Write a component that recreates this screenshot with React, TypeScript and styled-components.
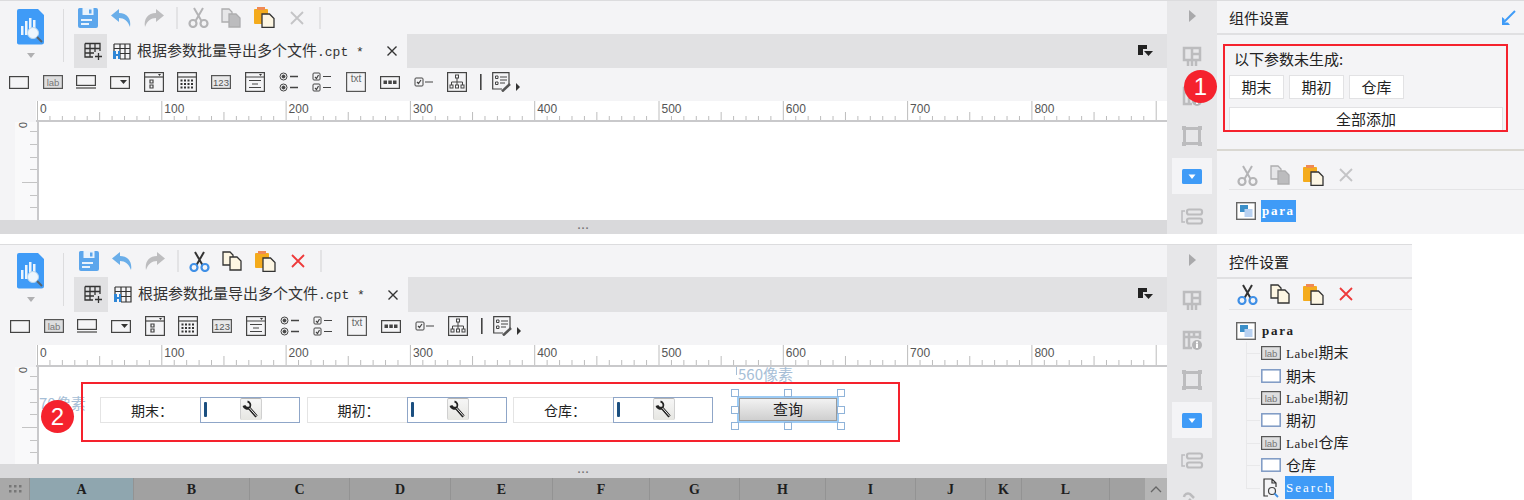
import React from "react";
import styled, { createGlobalStyle } from "styled-components";

const CJK = `"Noto Sans CJK SC", "Liberation Sans", sans-serif`;
const MONO = `"Liberation Mono", "Noto Sans CJK SC", monospace`;
const SERIF = `"Liberation Serif", "Noto Sans CJK SC", serif`;
const RED = "#f5222d";

const Global = createGlobalStyle`
  html, body { margin: 0; padding: 0; background: #fff; }
  * { box-sizing: border-box; }
`;

const Page = styled.div`
  width: 1524px; height: 500px; overflow: hidden; background: #fff;
  display: flex; flex-direction: column; gap: 10px;
  font-family: ${CJK}; color: #222;
`;
const Win = styled.section<{ $w: number; $h: number }>`
  position: relative; width: ${p => p.$w}px; height: ${p => p.$h}px; flex: none;
  display: flex; overflow: hidden; background: #f4f4f6; border-top: 1px solid #dcdcde;
`;
const Main = styled.div`
  width: 1167px; flex: none; display: flex; flex-direction: column; min-height: 0;
`;
const Head = styled.div` display: flex; flex: none; `;
const Brand = styled.div`
  width: 74px; flex: none; position: relative; display: flex; flex-direction: column;
  align-items: flex-start; padding: 8px 0 0 17px; gap: 8px;
  & > :last-child { margin-left: 10px; }
  &::after { content: ""; position: absolute; left: 63px; top: 8px; bottom: 6px; width: 1px; background: #dcdcde; }
`;
const HeadRight = styled.div` flex: 1; min-width: 0; display: flex; flex-direction: column; `;
const Toolbar = styled.div<{ $h: number; $pad?: number }>`
  height: ${p => p.$h}px; display: flex; align-items: center; gap: 7px; padding-left: ${p => p.$pad ?? 0}px;
`;
const ToolBtn = styled.span`
  width: 26px; height: 24px; display: flex; align-items: center; justify-content: center; flex: none;
`;
const ToolSep = styled.span` width: 2px; height: 22px; background: #e3e3e5; flex: none; margin-left: 2px; `;
const TabBar = styled.div<{ $h: number; $add: number }>`
  height: ${p => p.$h}px; background: #e1e1e3; display: flex; align-items: center;
  & > :first-child { width: ${p => p.$add}px; }
`;
const AddTab = styled.span` display: flex; align-items: center; justify-content: center; flex: none; padding-left: 5px; `;
const ActiveTab = styled.div`
  width: 300px; height: 100%; background: #f4f4f6; display: flex; align-items: center; padding: 0 10px 0 6px; gap: 6px;
`;
const TabName = styled.span` font-size: 15px; color: #333; white-space: nowrap; line-height: 20px; `;
const TabExt = styled.span` font-family: ${MONO}; font-size: 13px; `;
const TabClose = styled.span` margin-left: auto; display: flex; `;
const TabEnd = styled.span` margin-left: auto; margin-right: 14px; display: flex; `;

const WidgetBar = styled.div<{ $pad: number }>`
  height: 33px; flex: none; display: flex; align-items: center; gap: 9.7px; padding: 0 0 5px ${p => p.$pad}px;
`;
const WidgetBtn = styled.span<{ $w: number }>`
  width: ${p => p.$w}px; height: 22px; display: flex; align-items: center; justify-content: center; flex: none;
`;
const RulerRow = styled.div<{ $h: number }>`
  height: ${p => p.$h}px; flex: none; display: flex; padding-left: 36px;
`;
const RulerTop = styled.div`
  flex: 1; background: #fff; border-bottom: 2px solid #c9c9cb; overflow: hidden; display: flex;
`;
const CanvasRow = styled.div` flex: 1; min-height: 0; display: flex; padding-left: 15px; `;
const RulerLeft = styled.div`
  width: 22px; flex: none; background: #f9f9fa; overflow: hidden; display: flex;
`;
const Canvas = styled.div`
  flex: 1; background: #fff; border-left: 2px solid #c9c9cb; position: relative;
`;
const Grip = styled.div`
  height: 14px; flex: none; background: #d9d9db; color: #777; font-size: 11px; line-height: 10px;
  text-align: center; letter-spacing: 1px; font-weight: 700; font-family: "Liberation Sans", sans-serif;
`;
const GridHead = styled.div`
  height: 22px; flex: none; display: flex; background: #a1a1a1;
`;
const Corner = styled.span`
  width: 30px; flex: none; background: #a8a8a8; display: flex; align-items: center; justify-content: center;
  border-right: 1px solid #929292;
`;
const ColCell = styled.span<{ $w: number; $sel?: boolean }>`
  width: ${p => p.$w}px; flex: none; text-align: center; font: 700 14px/24px ${SERIF}; color: #1e1e1e;
  background: ${p => (p.$sel ? "#8fa6af" : "transparent")}; border-right: 1px solid #939393;
`;
const ScrollUp = styled.span`
  width: 22px; margin-left: auto; background: #b5b5b5; display: flex; align-items: center; justify-content: center;
`;

const Params = styled.div`
  position: absolute; left: 61px; top: 30px; display: flex; gap: 6.500px; height: 26px;
`;
const Param = styled.div` display: flex; `;
const ParamLabel = styled.span`
  width: 100px; height: 26px; border: 1px solid #e4e4e4; border-right: 0; background: #fff;
  font-size: 14px; line-height: 24px; padding-left: 30px; color: #222; white-space: nowrap;
`;
const ParamInput = styled.span`
  width: 100px; height: 26px; border: 1px solid #8fa6c8; background: #fff; position: relative;
  display: flex; align-items: center; padding-left: 3px; gap: 33px;
`;
const Caret = styled.span` width: 3px; height: 15px; background: #1b4f80; border-radius: 1px; margin-top: -2px; flex: none; `;
const Wrench = styled.span`
  width: 22px; height: 22px; background: linear-gradient(#f6f6f6, #e6e6e2); border-top: 1px solid #b5b5b5;
  border-left: 1px solid #d0d0d0; border-right: 1px solid #d0d0d0; border-radius: 2px; display: flex; flex: none; margin-top: -3px;
`;
const SizeTag = styled.span`
  position: absolute; left: 697px; top: -1px; font-size: 15px; line-height: 16px; color: #a6bed6; white-space: nowrap;
  padding-left: 2px;
  &::before { content: ""; position: absolute; left: 0; top: 1px; height: 8px; width: 1px; background: #a6bed6; }
`;
const SizeSide = styled.span`
  position: absolute; left: 0; top: 26px; font-size: 15px; line-height: 20px; color: #a6bed6; white-space: nowrap;
`;
const Selection = styled.div`
  position: absolute; left: 698px; top: 29px; width: 102px; height: 27px; border: 2px solid #9ccbf5;
`;
const QueryBtn = styled.span`
  display: block; height: 100%; background: linear-gradient(#f2f2f2, #cfcfcf); border: 1px solid #9a9a9a;
  text-align: center; font-size: 15px; line-height: 20px; color: #222;
`;
const Handles = styled.div` position: absolute; inset: -5px -4px; `;
const Handle = styled.i<{ $x: number; $y: number }>`
  position: absolute; width: 8px; height: 8px; background: #fff; border: 1px solid #8fb3d9;
  left: calc(${p => p.$x}% - 4px); top: calc(${p => p.$y}% - 4px);
`;

const Rail = styled.div`
  width: 50px; flex: none; background: #e7e7e9; display: flex; flex-direction: column; align-items: center; overflow: hidden;
`;
const RailArrow = styled.span` height: 30px; margin-bottom: 5px; display: flex; align-items: center; flex: none; `;
const RailItem = styled.span<{ $on?: boolean }>`
  height: 40px; width: 40px; flex: none; display: flex; align-items: center; justify-content: center; position: relative;
  ${p => p.$on ? `&::before { content: ""; position: absolute; inset: 2px 0; background: #f4f4f6; }` : ""}
  & > svg { position: relative; }
`;

const Side = styled.aside`
  flex: 1; min-width: 0; display: flex; flex-direction: column; position: relative;
  &::before { content: ""; position: absolute; top: -1px; left: 177px; right: 0; height: 1px; background: #b4dcf6; }
`;
const SideHead = styled.header<{ $h: number }>`
  height: ${p => p.$h}px; flex: none; border-bottom: 2px solid #e0e0e2; display: flex; align-items: center;
  justify-content: space-between; padding: 0 8px 0 12px;
`;
const SideTitle = styled.h2` margin: 0; font-size: 15px; font-weight: 400; color: #222; `;
const Missing = styled.div`
  flex: none; padding: 15px 0 18px 12px; border-bottom: 2px solid #dad8d2; display: flex; flex-direction: column; height: 116px;
`;
const MissingText = styled.div` height: 18px; font-size: 15px; line-height: 18px; margin-left: 5px; color: #222; `;
const ChipRow = styled.div` display: flex; gap: 5px; margin-top: 7px; `;
const Chip = styled.span`
  width: 55px; height: 24px; border: 1px solid #e2e2e4; background: #fff; text-align: center;
  font-size: 15px; line-height: 22px; color: #222;
`;
const AddAll = styled.span`
  display: block; width: 274px; height: 24px; margin-top: 8px; border: 1px solid #e2e2e4; background: #fff;
  text-align: center; font-size: 15px; line-height: 22px; color: #222;
`;
const SideTools = styled.div<{ $h: number; $top: number }>`
  height: ${p => p.$h}px; padding: ${p => p.$top}px 0 0 5px; margin-left: 12px; flex: none; border-bottom: 1px solid #e4e4e6;
  display: flex; align-items: center; gap: 7px;
`;
const Tree = styled.div` flex: none; display: flex; flex-direction: column; padding-top: 10px; position: relative; `;
const Root = styled.div`
  height: 22px; display: flex; align-items: center; padding-left: 19px; gap: 5px;
`;
const RootName = styled.span<{ $sel?: boolean }>`
  font: 700 13px/22px ${SERIF}; letter-spacing: 1.700px; padding: 0 1px; color: ${p => (p.$sel ? "#fff" : "#222")};
  background: ${p => (p.$sel ? "#3f9bf7" : "transparent")};
`;
const Node = styled.div`
  height: 22.4px; display: flex; align-items: center; padding-left: 44px; gap: 5px; position: relative; flex: none;
  &::before { content: ""; position: absolute; left: 29px; width: 14px; top: 50%; height: 1px; background: #e8e8ea; }
`;
const TreeLine = styled.i`
  position: absolute; left: 29px; top: 32px; bottom: 11px; width: 1px; background: #e8e8ea;
`;
const NodeName = styled.span` font-size: 15px; line-height: 22px; color: #222; white-space: nowrap; `;
const NodeMono = styled.span` font: 400 13px/22px ${SERIF}; letter-spacing: .6px; `;
const SearchName = styled.span`
  font: 400 13px/23px ${SERIF}; letter-spacing: 2px; background: #3f9bf7; color: #fff; padding: 0 1px; height: 23px; margin-left: -1px;
`;

const RedBox = styled.div<{ $l: number; $t: number; $w: number; $h: number }>`
  position: absolute; left: ${p => p.$l}px; top: ${p => p.$t}px; width: ${p => p.$w}px; height: ${p => p.$h}px;
  border: 2px solid ${RED}; pointer-events: none;
`;
const Badge = styled.span<{ $l: number; $t: number }>`
  position: absolute; left: ${p => p.$l}px; top: ${p => p.$t}px; width: 33px; height: 33px; border-radius: 50%;
  background: ${RED}; color: #fff; font: 400 24px/33px "Liberation Sans", sans-serif; text-align: center;
`;

/* ---------- icons ---------- */
const Logo = () => (
  <svg width="28" height="36" viewBox="0 0 28 36">
    <path d="M2 0H21L27 6V33a2.500 2.500 0 0 1-2.500 2.500H2A2 2 0 0 1 0 33V2A2 2 0 0 1 2 0Z" fill="#3f9bf7" />
    <g fill="#fff" opacity=".9">
      <rect x="4" y="17" width="2.500" height="9" /><rect x="8" y="12" width="2.500" height="14" />
      <rect x="12" y="9" width="2.500" height="14" /><rect x="16" y="11" width="2.500" height="10" />
    </g>
    <circle cx="16" cy="24" r="5.500" fill="#eef6fd" stroke="#b9d6ee" />
    <path d="M20 28l5 5" stroke="#55636e" strokeWidth="2" />
  </svg>
);
const Caret6 = () => (<svg width="8" height="5" viewBox="0 0 8 5"><path d="M0 0h8L4 5z" fill="#b0b0b2" /></svg>);
const Save = () => (
  <svg width="20" height="20" viewBox="0 0 20 20">
    <path d="M1.500 0H18a2 2 0 0 1 2 2V18a2 2 0 0 1-2 2H2a2 2 0 0 1-2-2V1.500A1.500 1.500 0 0 1 1.500 0Z" fill="#5ca6ec" />
    <rect x="4.500" y="0" width="11" height="7" fill="#eaf3fc" /><rect x="11" y="1.500" width="2.500" height="4" fill="#5ca6ec" />
    <rect x="3" y="11" width="11" height="2" fill="#eaf3fc" /><rect x="3" y="15" width="8" height="2" fill="#eaf3fc" />
  </svg>
);
const Undo = ({ c, flip }: { c: string; flip?: boolean }) => (
  <svg width="22" height="18" viewBox="0 0 22 18">
    <path transform={flip ? "matrix(-1 0 0 1 22 0)" : undefined} d="M9 0L1 6.500 9 13V9C14 9 18 12 20 18 21.500 10 17 4 9 4Z" fill={c} />
  </svg>
);
const Cut = ({ a, b }: { a: string; b: string }) => (
  <svg width="21" height="21" viewBox="0 0 21 21" fill="none">
    <path d="M6 1L13.500 14M15 1L7.500 14" stroke={a} strokeWidth="2" />
    <circle cx="5" cy="16.500" r="3.500" stroke={b} strokeWidth="2.200" /><circle cx="16" cy="16.500" r="3.500" stroke={b} strokeWidth="2.200" />
  </svg>
);
const Copy = ({ on }: { on?: boolean }) => {
  const s = on ? "#333" : "#adadaf"; const f = on ? "#fdf6e3" : "#e6e6e8"; const g = on ? "#fdf6e3" : "#bcbcbe";
  return (
    <svg width="20" height="20" viewBox="0 0 20 20">
      <path d="M1 1H8L11 4V14H1Z" fill={f} stroke={s} strokeWidth="1.300" />
      <path d="M8 6H15L19 10V19H8Z" fill={g} stroke={s} strokeWidth="1.300" />
    </svg>
  );
};
const Paste = () => (
  <svg width="21" height="21" viewBox="0 0 21 21">
    <rect x="0" y="2" width="14" height="15" rx="1" fill="#f4ab1c" /><rect x="3" y="0" width="8" height="3" fill="#f08a54" />
    <path d="M8 7H15.500L20 11.500V20.500H8Z" fill="#fdf6e3" stroke="#333" strokeWidth="1.300" />
  </svg>
);
const Del = ({ c }: { c: string }) => (
  <svg width="14" height="14" viewBox="0 0 14 14"><path d="M1 1L13 13M13 1L1 13" stroke={c} strokeWidth="1.800" /></svg>
);
const Tools = ({ on }: { on?: boolean }) => (
  <>
    <ToolBtn>{on ? <Cut a="#333" b="#3f8fe6" /> : <Cut a="#b4b4b6" b="#b4b4b6" />}</ToolBtn>
    <ToolBtn><Copy on={on} /></ToolBtn>
    <ToolBtn><Paste /></ToolBtn>
    <ToolBtn><Del c={on ? "#ee3a3a" : "#c4c4c6"} /></ToolBtn>
  </>
);
const GridPlus = () => (
  <svg width="19" height="19" viewBox="0 0 19 19" fill="none" stroke="#333" strokeWidth="1.300">
    <path d="M1 1.500H16V9M1 1.500V15H9M1 6.500H16M1 11H10M6 1.500V15M11 1.500V10M14.500 11V18M11 14.500H18" />
  </svg>
);
const FileGrid = () => (
  <svg width="18" height="17" viewBox="0 0 18 17">
    <path d="M1 1H17V16H7M1 1V9M1 5.500H17M1 1M7 1V16M12 1V16M7 10.500H17" fill="none" stroke="#333" strokeWidth="1.200" />
    <path d="M0 8h3v3h2V8h2v8H5v-3H3v3H0z" fill="#2f86d6" />
  </svg>
);
const SmallX = () => (<svg width="10" height="10" viewBox="0 0 10 10"><path d="M.5.500l9 9M9.500.500l-9 9" stroke="#333" strokeWidth="1.400" /></svg>);
const TabMenu = () => (
  <svg width="15" height="13" viewBox="0 0 15 13"><path d="M0 0H9V4H5V10H0Z" fill="#222" /><path d="M6 6H15L10.500 11Z" fill="#222" /></svg>
);

const B = { fill: "none", stroke: "#444", strokeWidth: 1.200 } as const;
const Lab = ({ w = 20, h = 14 }: { w?: number; h?: number }) => (
  <svg width={w} height={h} viewBox="0 0 20 14">
    <rect x=".6" y=".6" width="18.800" height="12.800" fill="#dededf" stroke="#555" strokeWidth="1.200" />
    <text x="10" y="10.500" textAnchor="middle" fontFamily="Liberation Sans" fontSize="9.500" fill="#777">lab</text>
  </svg>
);
const widgets: [number, React.ReactNode][] = [
  [24, <svg key="a" width="20" height="13" viewBox="0 0 20 13"><rect x=".6" y=".6" width="18.800" height="11.800" {...B} /></svg>],
  [24, <Lab key="b" />],
  [24, <svg key="c" width="20" height="14" viewBox="0 0 20 14"><rect x=".6" y=".6" width="18.800" height="9.800" {...B} /><path d="M0 13H20" {...B} /></svg>],
  [24, <svg key="d" width="20" height="13" viewBox="0 0 20 13"><rect x=".6" y=".6" width="18.800" height="11.800" {...B} /><path d="M10 4h7l-3.500 4z" fill="#333" /></svg>],
  [24, <svg key="e" width="20" height="20" viewBox="0 0 20 20"><rect x=".6" y=".6" width="18.800" height="18.800" {...B} /><path d="M1 5H19" {...B} /><path d="M14 2h3l-1.500 2z" fill="#333" /><path d="M6 8h3v3H6zM6 13h3v3H6z" {...B} /></svg>],
  [24, <svg key="f" width="20" height="20" viewBox="0 0 20 20"><rect x=".6" y=".6" width="18.800" height="18.800" {...B} /><path d="M1 5H19" {...B} /><g fill="#333">{[0,1,2,3].flatMap(c => [0,1,2].map(r => <rect key={`${c}${r}`} x={3.500 + c * 3.500} y={7.500 + r * 3.500} width="2" height="2" />))}</g></svg>],
  [24, <svg key="g" width="20" height="14" viewBox="0 0 20 14"><rect x=".6" y=".6" width="18.800" height="12.800" fill="#e8e8e9" stroke="#555" strokeWidth="1.200" /><text x="10" y="10.500" textAnchor="middle" fontFamily="Liberation Sans" fontSize="9.500" fill="#555">123</text></svg>],
  [24, <svg key="h" width="20" height="20" viewBox="0 0 20 20"><rect x=".6" y=".6" width="18.800" height="18.800" {...B} /><path d="M1 5H19M4 8.500H16M7 12H13M4 15.500H16" {...B} /><path d="M14 2h3l-1.500 2z" fill="#333" /></svg>],
  [24, <svg key="i" width="20" height="20" viewBox="0 0 20 20" fill="none" stroke="#444"><circle cx="4.500" cy="4.500" r="3.500" /><circle cx="4.500" cy="15.500" r="3.500" /><circle cx="4.500" cy="4.500" r="1.500" fill="#444" /><circle cx="4.500" cy="15.500" r="1.500" fill="#444" /><path d="M11 4.500H19M11 15.500H19" strokeWidth="1.300" /></svg>],
  [24, <svg key="j" width="20" height="20" viewBox="0 0 20 20" fill="none" stroke="#444"><rect x="1" y="1" width="7" height="7" rx="1" /><rect x="1" y="12" width="7" height="7" rx="1" /><path d="M3 5l1.500 1.500L6.500 3M3 16l1.500 1.500L6.500 14M11 4.500H19M11 15.500H19" strokeWidth="1.200" /></svg>],
  [24, <svg key="k" width="20" height="20" viewBox="0 0 20 20"><rect x=".6" y=".6" width="18.800" height="18.800" fill="none" stroke="#555" strokeWidth="1.200" /><text x="10" y="10" textAnchor="middle" fontFamily="Liberation Sans" fontSize="10" fill="#666">txt</text></svg>],
  [24, <svg key="l" width="20" height="13" viewBox="0 0 20 13"><rect x=".6" y=".6" width="18.800" height="11.800" {...B} /><g fill="#444"><rect x="3.500" y="4.500" width="3.500" height="3.500" /><rect x="8.300" y="4.500" width="3.500" height="3.500" /><rect x="13" y="4.500" width="3.500" height="3.500" /></g></svg>],
  [24, <svg key="m" width="19" height="10" viewBox="0 0 19 10" fill="none" stroke="#444"><rect x="1" y="1" width="8" height="8" rx="1" /><path d="M3 5l1.500 1.500L7 3M11 5H19" strokeWidth="1.200" /></svg>],
  [24, <svg key="n" width="20" height="20" viewBox="0 0 20 20" fill="none" stroke="#444"><rect x=".6" y=".6" width="18.800" height="18.800" strokeWidth="1.200" /><path d="M10 6V10M4.500 13V10H15.500V13M10 10V13" /><rect x="8.500" y="3" width="3" height="3" /><rect x="3" y="13" width="3" height="3" /><rect x="8.500" y="13" width="3" height="3" /><rect x="14" y="13" width="3" height="3" /></svg>],
  [4, <svg key="o" width="2" height="16" viewBox="0 0 2 16"><rect width="1.600" height="16" fill="#444" /></svg>],
  [30, <svg key="p" width="30" height="20" viewBox="0 0 30 20" fill="none" stroke="#444"><path d="M17 12V.7H.7V17H10" strokeWidth="1.200" /><path d="M3.500 4h2.500v2.500H3.500zM3.500 10h2.500v2.500H3.500zM8 5H15M8 8H15M8 11H13" /><path d="M10 19.500L18 12" strokeWidth="2.500" stroke="#555" /><path d="M24 11l4 4-4 4z" fill="#333" stroke="none" /></svg>],
];
const WidgetRow = ({ pad }: { pad: number }) => (
  <WidgetBar $pad={pad}>{widgets.map(([w, ic], i) => <WidgetBtn key={i} $w={w}>{ic}</WidgetBtn>)}</WidgetBar>
);

const Ruler = () => {
  const step = 12.43; const ticks = Array.from({ length: 91 }, (_, i) => i);
  return (
    <svg width="1131" height="24" viewBox="0 0 1131 24">
      {ticks.map(i => {
        const x = 1 + i * step; const major = i % 10 === 0; const mid = i % 5 === 0;
        return <rect key={i} x={x} y={major ? 0 : mid ? 11 : 15} width="1" height={major ? 20 : mid ? 9 : 5} fill="#bdbdbd" />;
      })}
      {[0,1,2,3,4,5,6,7,8].map(i => (
        <text key={i} x={4 + i * 124.3} y="12" fontFamily="Liberation Sans" fontSize="12" fill="#555">{i * 100}</text>
      ))}
    </svg>
  );
};
const VRuler = ({ h }: { h: number }) => (
  <svg width="22" height={h} viewBox={`0 0 22 ${h}`}>
    {[9, 22, 35, 47, 60, 73, 85].map((y, i) => (
      <rect key={y} x={i === 4 ? 7 : 15} y={y} width={i === 4 ? 15 : 7} height="1" fill="#c4c4c4" />
    ))}
    <text transform="translate(7 0) rotate(90)" x="0" y="0" fontFamily="Liberation Sans" fontSize="11" fill="#555" textAnchor="start" dominantBaseline="middle">0</text>
  </svg>
);

const G = { fill: "none", stroke: "#bcbcbe", strokeWidth: 3 } as const;
const railIcons: React.ReactNode[] = [
  <svg key="a" width="20" height="21" viewBox="0 0 20 21"><path d="M2 2H18V14H2ZM2 2V8M6 14V20M10 2V20M14 14V20M18 8H10M2 8" {...G} strokeWidth={2.500} /></svg>,
  <svg key="b" width="20" height="20" viewBox="0 0 20 20"><path d="M10 18H2V2H18V9M2 7H18M7 2V18M12 2V7" {...G} strokeWidth={2.500} /><circle cx="15" cy="15" r="5" fill="#b4b4b6" /><rect x="14" y="14" width="2" height="4" fill="#fff" /><rect x="14" y="11.500" width="2" height="2" fill="#fff" /></svg>,
  <svg key="c" width="20" height="20" viewBox="0 0 20 20"><rect x="2.500" y="2.500" width="15" height="15" {...G} /><g fill="#bcbcbe"><rect width="4" height="4" /><rect x="16" width="4" height="4" /><rect y="16" width="4" height="4" /><rect x="16" y="16" width="4" height="4" /></g></svg>,
  <svg key="d" width="20" height="15" viewBox="0 0 20 15"><rect width="20" height="15" rx="1.500" fill="#3f9bf7" /><path d="M6.500 5.500h7L10 10z" fill="#fff" /></svg>,
  <svg key="e" width="23" height="17" viewBox="0 0 23 17" fill="none" stroke="#bcbcbe" strokeWidth="2.200"><rect x="6" y="1.500" width="15" height="5" rx="2" /><rect x="6" y="10.500" width="15" height="5" rx="2" /><path d="M4 3H1V14H4" strokeWidth="1.500" /></svg>,
  <svg key="f" width="22" height="22" viewBox="0 0 22 22" fill="none" stroke="#bcbcbe" strokeWidth="2.500"><path d="M3 8a4 4 0 0 1 6-3l4 4M8 10l5 5a4 4 0 0 0 6-1" /></svg>,
];
const RailBar = () => (
  <Rail>
    <RailArrow><svg width="7" height="12" viewBox="0 0 7 12"><path d="M0 0L7 6 0 12z" fill="#a9a9ab" /></svg></RailArrow>
    {railIcons.map((ic, i) => <RailItem key={i} $on={i === 3}>{ic}</RailItem>)}
  </Rail>
);

const Stack = () => (
  <svg width="20" height="18" viewBox="0 0 20 18">
    <rect x=".7" y=".7" width="18.600" height="16.600" fill="#fff" stroke="#666" strokeWidth="1.400" />
    <rect x="4" y="3" width="8" height="7" fill="#3b8fc9" /><rect x="8.500" y="7" width="8" height="8" fill="#b9d2f2" />
  </svg>
);
const InputIcon = () => (
  <svg width="20" height="14" viewBox="0 0 20 14"><rect x=".8" y=".8" width="18.400" height="12.400" fill="#fff" stroke="#7d99c4" strokeWidth="1.500" /></svg>
);
const SearchDoc = () => (
  <svg width="20" height="20" viewBox="0 0 20 20" fill="none" stroke="#333" strokeWidth="1.200">
    <path d="M7 18H3V1H11L15 5V9M11 1V5H15" /><circle cx="11" cy="13" r="3.500" stroke="#444" /><path d="M13.500 15.500L17 19" strokeWidth="1.800" stroke="#3f8fe6" />
  </svg>
);
const WrenchIcon = () => (
  <svg width="20" height="21" viewBox="0 0 20 21">
    <path d="M3 6.500a3.800 3.800 0 0 0 5.200 2.500l7.300 8.500" fill="none" stroke="#222" strokeWidth="3" />
    <path d="M8.500 9l7 8" stroke="#f2f2f2" strokeWidth="1" />
    <path d="M6.500 2.500a3.800 3.800 0 0 1 2.500 5.500" fill="none" stroke="#222" strokeWidth="1.800" />
  </svg>
);

const cols: [string, number][] = [["A",104],["B",116],["C",100],["D",101],["E",102],["F",97],["G",90],["H",86],["I",90],["J",70],["K",36],["L",88]];
const fields = ["期末", "期初", "仓库"];
const nodes: [string, boolean][] = [["期末", true], ["期末", false], ["期初", true], ["期初", false], ["仓库", true], ["仓库", false]];
const handles: [number, number][] = [[0,0],[50,0],[100,0],[0,50],[100,50],[0,100],[50,100],[100,100]];

const Tab = () => (
  <ActiveTab>
    <FileGrid />
    <TabName>根据参数批量导出多个文件<TabExt>.cpt *</TabExt></TabName>
    <TabClose><SmallX /></TabClose>
  </ActiveTab>
);
const Upper = ({ on, tool, tab, add, pad }: { on: boolean; tool: number; tab: number; add: number; pad: number }) => (
  <Head>
    <Brand><Logo /><Caret6 /></Brand>
    <HeadRight>
      <Toolbar $h={tool} $pad={pad}>
        <ToolBtn><Save /></ToolBtn>
        <ToolBtn><Undo c="#6aaee9" /></ToolBtn>
        <ToolBtn><Undo c="#bdbdbf" flip /></ToolBtn>
        <ToolSep />
        <Tools on={on} />
        <ToolSep />
      </Toolbar>
      <TabBar $h={tab} $add={add}>
        <AddTab><GridPlus /></AddTab>
        <Tab />
        <TabEnd><TabMenu /></TabEnd>
      </TabBar>
    </HeadRight>
  </Head>
);

export default function App() {
  return (
    <>
      <Global />
      <Page>
        <Win $w={1524} $h={234}>
          <Main>
            <Upper on={false} tool={33} tab={34} add={33} pad={1} />
            <WidgetRow pad={7} />
            <RulerRow $h={21}><RulerTop><Ruler /></RulerTop></RulerRow>
            <CanvasRow><RulerLeft><VRuler h={98} /></RulerLeft><Canvas /></CanvasRow>
            <Grip>...</Grip>
          </Main>
          <RailBar />
          <Side>
            <SideHead $h={34}>
              <SideTitle>组件设置</SideTitle>
              <svg width="14" height="15" viewBox="0 0 14 15"><path d="M13 1L2 12" stroke="#3f9bf7" strokeWidth="2" /><path d="M0 7V15H8L6 12.500H2.500V9Z" fill="#3f9bf7" /></svg>
            </SideHead>
            <Missing>
              <MissingText>以下参数未生成:</MissingText>
              <ChipRow>{fields.map(f => <Chip key={f}>{f}</Chip>)}</ChipRow>
              <AddAll>全部添加</AddAll>
            </Missing>
            <SideTools $h={39} $top={10}><Tools /></SideTools>
            <Tree>
              <Root><Stack /><RootName $sel>para</RootName></Root>
            </Tree>
          </Side>
          <RedBox $l={1223} $t={43} $w={285} $h={88} />
          <Badge $l={1184} $t={69} >1</Badge>
        </Win>
        <Win $w={1412} $h={256}>
          <Main>
            <Upper on tool={32} tab={35} add={34} pad={2} />
            <WidgetRow pad={8} />
            <RulerRow $h={22}><RulerTop><Ruler /></RulerTop></RulerRow>
            <CanvasRow>
              <RulerLeft><VRuler h={97} /></RulerLeft>
              <Canvas>
                <SizeSide>70像素</SizeSide>
                <SizeTag>560像素</SizeTag>
                <Params>
                  {fields.map(f => (
                    <Param key={f}>
                      <ParamLabel>{f}：</ParamLabel>
                      <ParamInput><Caret /><Wrench><WrenchIcon /></Wrench></ParamInput>
                    </Param>
                  ))}
                </Params>
                <Selection>
                  <QueryBtn>查询</QueryBtn>
                  <Handles>{handles.map(([x, y]) => <Handle key={`${x}-${y}`} $x={x} $y={y} />)}</Handles>
                </Selection>
              </Canvas>
            </CanvasRow>
            <Grip>...</Grip>
            <GridHead>
              <Corner>
                <svg width="14" height="10" viewBox="0 0 14 10" fill="#777">
                  {[0,1,2].flatMap(c => [0,1].map(r => <rect key={`${c}${r}`} x={1 + c * 5} y={1 + r * 5} width="2.500" height="2.500" />))}
                </svg>
              </Corner>
              {cols.map(([c, w], i) => <ColCell key={c} $w={w} $sel={i === 0}>{c}</ColCell>)}
              <ScrollUp><svg width="12" height="7" viewBox="0 0 12 7"><path d="M1 6L6 1 11 6" fill="none" stroke="#666" strokeWidth="1.300" /></svg></ScrollUp>
            </GridHead>
          </Main>
          <RailBar />
          <Side>
            <SideHead $h={34}><SideTitle>控件设置</SideTitle></SideHead>
            <SideTools $h={31} $top={0}><Tools on /></SideTools>
            <Tree>
              <TreeLine />
              <Root><Stack /><RootName>para</RootName></Root>
              {nodes.map(([n, isLabel], i) => (
                <Node key={i}>
                  {isLabel ? <Lab /> : <InputIcon />}
                  <NodeName>{isLabel && <NodeMono>Label</NodeMono>}{n}</NodeName>
                </Node>
              ))}
              <Node><SearchDoc /><SearchName>Search</SearchName></Node>
            </Tree>
          </Side>
          <RedBox $l={81} $t={137} $w={819} $h={60} />
          <Badge $l={41} $t={155}>2</Badge>
        </Win>
      </Page>
    </>
  );
}
